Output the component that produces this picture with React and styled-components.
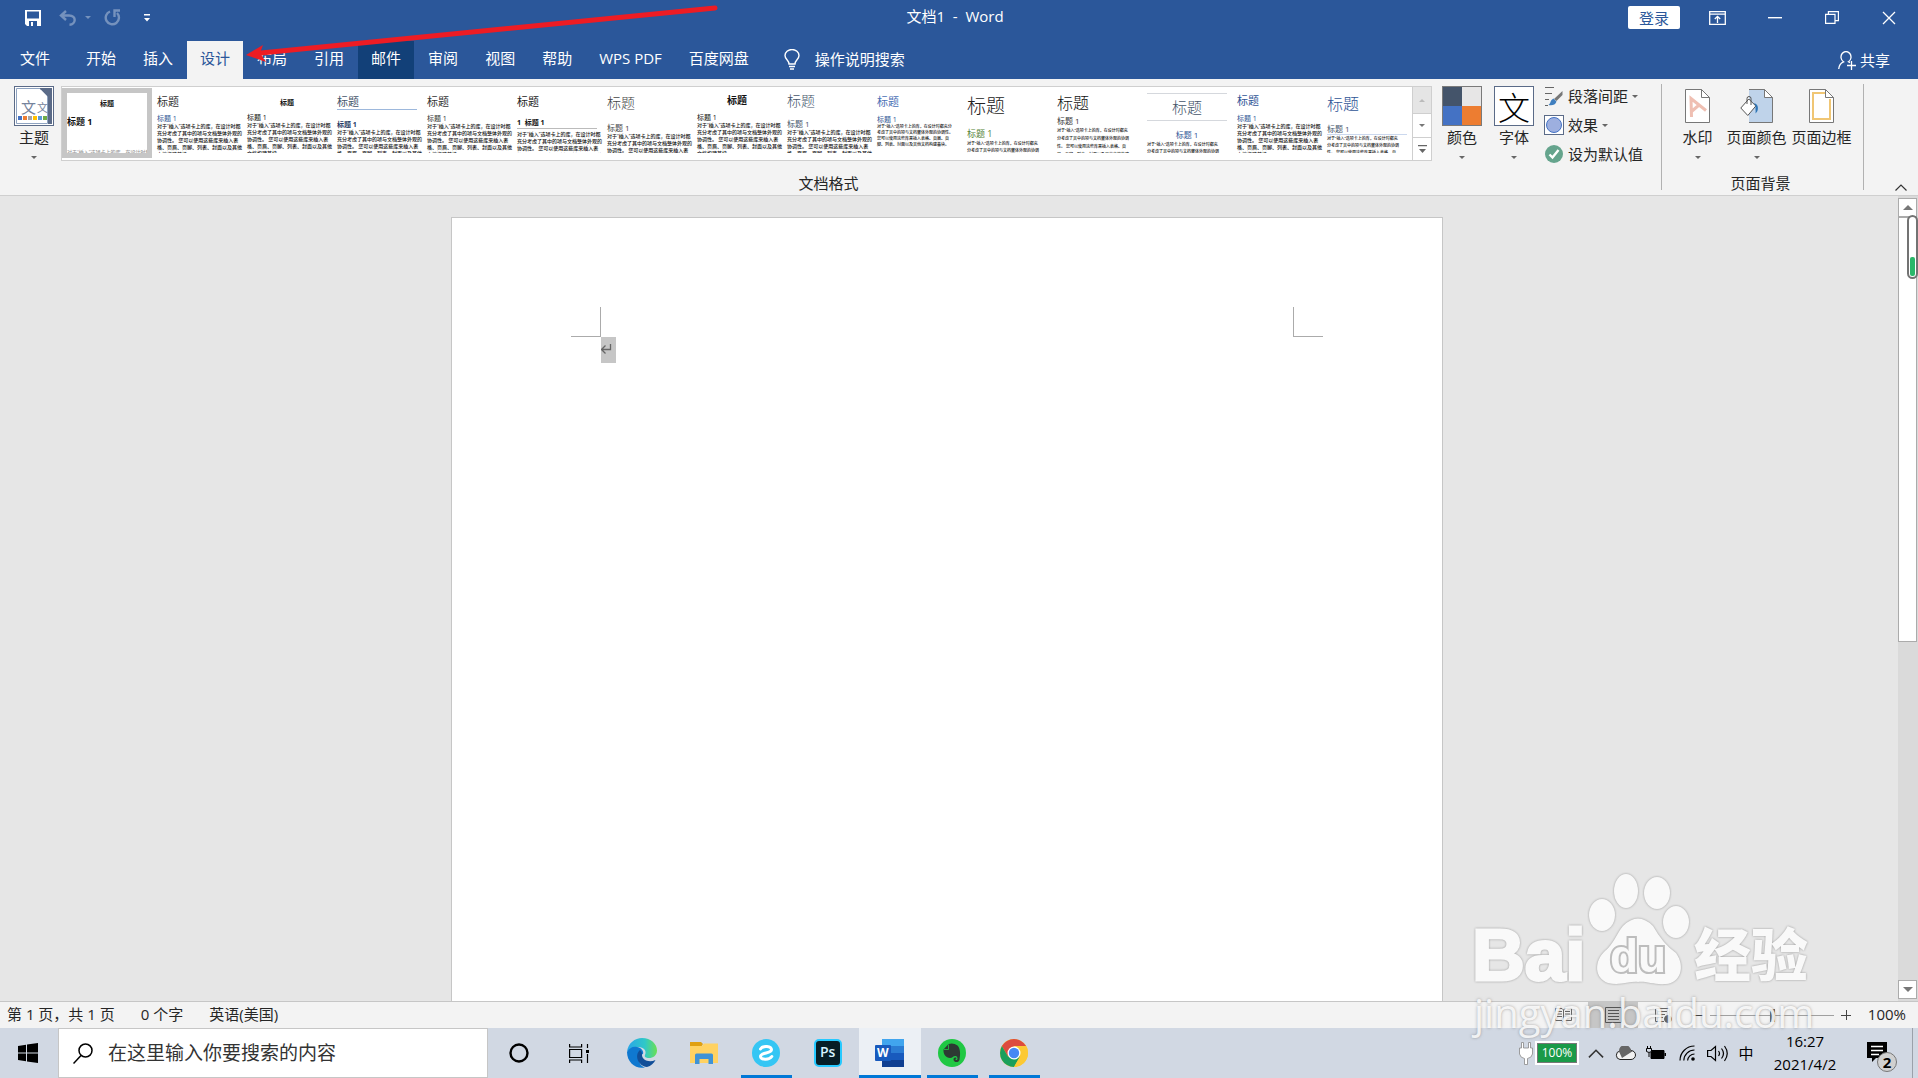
import React from "react";
import styled, { createGlobalStyle, css } from "styled-components";

const GlobalStyle = createGlobalStyle`
  * {
    box-sizing: border-box;
  }
  body {
    margin: 0;
    font-family: "Open Sans", "Noto Sans CJK SC", sans-serif;
    font-size: 15px;
    line-height: 20px;
    color: #262626;
  }
  button, input {
    font: inherit;
    color: inherit;
    margin: 0;
    padding: 0;
    border: 0;
    background: none;
  }
  svg {
    display: block;
    flex: none;
  }
`;

const Window = styled.div`
  position: relative;
  display: flex;
  flex-direction: column;
  height: 100vh;
  overflow: hidden;
`;

/* ---------- title bar and tabs ---------- */

const Header = styled.header`
  background: #2b579a;
  color: white;
`;

const TitleBar = styled.div`
  display: grid;
  grid-template-columns: 1fr auto 1fr;
  align-items: center;
  height: 41px;
  padding-bottom: 6px;
`;

const QuickAccess = styled.div`
  display: flex;
  align-items: center;
  padding-left: 25px;
`;

const QuickButton = styled.button`
  display: flex;
  margin-right: ${({ $gap }) => $gap || 0}px;
  opacity: ${({ disabled }) => (disabled ? 0.35 : 1)};
`;

const DocTitle = styled.h1`
  margin: 0;
  padding: 0 8px 4px 0;
  font-size: 15px;
  font-weight: 400;
  white-space: pre;
`;

const WindowControls = styled.div`
  display: flex;
  align-items: center;
  justify-content: flex-end;
  padding-right: 1px;
`;

const LoginButton = styled.button`
  width: 52px;
  height: 23px;
  margin-right: 9px;
  border-radius: 2px;
  background: white;
  color: #2b579a;
`;

const ControlButton = styled.button`
  display: flex;
  align-items: center;
  justify-content: center;
  width: 57px;
  height: 34px;
`;

const TabBar = styled.nav`
  display: flex;
  gap: 1px;
  height: 38px;
`;

const Tab = styled.button`
  padding: ${({ $file }) => ($file ? "0 22px 4px 20px" : "0 13px 4px")};
  white-space: nowrap;
  ${({ $hover }) => $hover && css`
    background: #124078;
  `}
  ${({ $active }) => $active && css`
    background: #f3f3f3;
    color: #2b579a;
  `}
`;

const TellMe = styled.button`
  display: flex;
  align-items: center;
  gap: 15px;
  padding: 0 21px 2px;
`;

const ShareButton = styled.button`
  display: flex;
  align-items: center;
  gap: 4px;
  margin-left: auto;
  padding-right: 28px;
`;

/* ---------- ribbon ---------- */

const Ribbon = styled.section`
  display: flex;
  height: 117px;
  padding-top: 5px;
  background: #f3f3f3;
  border-bottom: 1px solid #cfcfcf;
`;

const Group = styled.div`
  display: flex;
  flex-direction: column;
  justify-content: space-between;
  flex: ${({ $grow }) => ($grow ? "1 1 0" : "none")};
  min-width: 0;
  height: 106px;
  border-right: 1px solid #b1b1b1;
`;

const GroupRow = styled.div`
  display: flex;
  padding: 2px ${({ $indent }) => $indent || 0}px 0;
`;

const GroupLabel = styled.div`
  line-height: 14px;
  padding-right: 4px;
  text-align: center;
`;

const BigButton = styled.button`
  display: flex;
  flex-direction: column;
  align-items: center;
  flex: none;
  width: ${({ $width }) => $width}px;
  padding-left: ${({ $indent }) => $indent || 0}px;
  white-space: nowrap;
`;

const IconSlot = styled.span`
  display: flex;
  align-items: center;
  justify-content: center;
  height: 40px;
  margin-bottom: 1px;
`;

const Arrow = styled.span`
  width: 0;
  border: 3px solid transparent;
  border-top-color: #666;
  border-bottom: 0;
  margin-top: ${({ $below }) => ($below ? 9 : 0)}px;
`;

const Gallery = styled.div`
  display: flex;
  flex: 1;
  min-width: 0;
  height: 75px;
  margin-right: 4px;
  background: white;
  border: 1px solid #cfcfcf;
`;

const Cards = styled.div`
  display: flex;
  flex: 1;
  min-width: 0;
  overflow: hidden;
  padding-top: 1px;
`;

const Card = styled.button`
  flex: none;
  width: 90px;
  height: 70px;
  padding: 5px;
  text-align: left;
  box-shadow: ${({ $selected }) => ($selected ? "inset 0 0 0 5px #c6c6c6" : "none")};
`;

const Preview = styled.span`
  display: block;
  height: 60px;
  overflow-x: ${({ $selected }) => ($selected ? "clip" : "visible")};
  overflow-y: clip;
  color: #111;
`;

const PreviewTitle = styled.span`
  display: flex;
  align-items: center;
  justify-content: ${({ $center }) => ($center ? "center" : "flex-start")};
  height: ${({ $height }) => $height}px;
  font-size: ${({ $size }) => $size}px;
  font-weight: ${({ $bold, $size }) => ($bold ? 700 : $size > 12 ? 300 : 400)};
  line-height: 1;
  color: ${({ $color }) => $color};
  border: 0 solid ${({ $line }) => $line || "transparent"};
  border-bottom-width: ${({ $line }) => ($line ? 1 : 0)}px;
  border-top-width: ${({ $line, $center }) => ($line && $center ? 1 : 0)}px;
`;

const PreviewHeading = styled(PreviewTitle)`
  margin-top: ${({ $gap }) => $gap}px;
  border-top-width: 0;
  white-space: pre;
`;

const PreviewBody = styled.span`
  display: block;
  width: ${({ $width }) => $width || 86}px;
  margin-top: ${({ $gap }) => $gap || 0}px;
  font-size: ${({ $size }) => $size}px;
  font-weight: 500;
  line-height: ${({ $leading }) => $leading || 7}px;
  word-break: break-all;
  color: ${({ $faint }) => ($faint ? "#999" : "#111")};
`;

const GalleryScroll = styled.div`
  display: grid;
  grid-template-rows: 26px 24px 23px;
  flex: none;
  width: 19px;
  border-left: 1px solid #cfcfcf;
`;

const ScrollStep = styled.button`
  display: flex;
  align-items: center;
  justify-content: center;
  & + & {
    border-top: 1px solid #cfcfcf;
  }
  &:disabled {
    background: #e5e5e5;
  }
`;

const SmallColumn = styled.div`
  display: flex;
  flex-direction: column;
  gap: 9px;
  flex: none;
  width: 121px;
  padding-left: 4px;
`;

const SmallButton = styled.button`
  display: flex;
  align-items: center;
  gap: 4px;
  height: 20px;
  white-space: nowrap;
`;

const CollapseButton = styled.button`
  display: flex;
  align-items: flex-end;
  justify-content: flex-end;
  width: 54px;
  padding: 0 11px 4px 0;
`;

/* ---------- document ---------- */

const Workspace = styled.main`
  display: flex;
  flex: 1;
  min-height: 0;
  background: #e6e6e6;
`;

const Canvas = styled.div`
  display: flex;
  justify-content: center;
  flex: 1;
  padding: 21px 4px 0 0;
  overflow: hidden;
`;

const Page = styled.article`
  width: 992px;
  height: 1403px;
  padding: 89px 119px 0;
  background: white;
  border: 1px solid #c6c6c6;
`;

const Marks = styled.div`
  display: flex;
  justify-content: space-between;
`;

const Mark = styled.span`
  width: 30px;
  height: 30px;
  border: 0 solid #ababab;
  border-bottom-width: 1px;
  ${({ $side }) => ($side === "left" ? "border-right-width: 1px;" : "border-left-width: 1px;")}
`;

const Paragraph = styled.p`
  width: 15px;
  height: 26px;
  margin: 0 0 0 30px;
  padding-top: 7px;
  background: #c6c6c6;
`;

const ScrollBar = styled.div`
  display: flex;
  flex-direction: column;
  width: 20px;
  padding: 2px 1px 2px 0;
  background: #dadada;
`;

const ScrollButton = styled.button`
  display: flex;
  align-items: center;
  justify-content: center;
  height: 19px;
  background: white;
  border: 1px solid #ababab;
`;

const Thumb = styled.div`
  flex: 5;
  background: white;
  border: 1px solid #ababab;
`;

const Track = styled.div`
  flex: 4;
`;

const Meter = styled.div`
  position: absolute;
  top: 215px;
  right: 0;
  display: flex;
  flex-direction: column;
  justify-content: flex-end;
  width: 11px;
  height: 64px;
  padding: 1px;
  border: 2px solid #737373;
  border-radius: 6px;
  background: white;
`;

const MeterFill = styled.span`
  height: 19px;
  border-radius: 2px;
  background: #2bb76a;
`;

/* ---------- status bar ---------- */

const StatusBar = styled.footer`
  display: flex;
  align-items: center;
  height: 27px;
  padding: 0 12px 0 7px;
  background: #f3f3f3;
  border-top: 1px solid #c6c6c6;
`;

const StatusText = styled.span`
  margin-right: 26px;
  padding-bottom: 2px;
`;

const Views = styled.div`
  display: flex;
  height: 100%;
  margin-left: auto;
  margin-right: 2px;
`;

const ViewButton = styled.button`
  display: flex;
  align-items: center;
  justify-content: center;
  width: 50px;
  background: ${({ $active }) => ($active ? "#c6c6c6" : "none")};
`;

const ZoomStep = styled.button`
  width: 16px;
  height: 20px;
  display: flex;
  align-items: center;
  justify-content: center;
`;

const ZoomSlider = styled.input`
  appearance: none;
  width: 124px;
  height: 13px;
  margin: 0 4px;
  background: linear-gradient(#a0a0a0, #a0a0a0) center / 100% 1px no-repeat;
  &::-webkit-slider-thumb {
    appearance: none;
    width: 5px;
    height: 13px;
    background: #666;
  }
`;

const ZoomValue = styled.span`
  width: 52px;
  padding-bottom: 2px;
  text-align: right;
`;

/* ---------- taskbar ---------- */

const TaskBar = styled.nav`
  display: flex;
  flex: none;
  height: 50px;
  background: #d1d8e3;
  color: black;
`;

const StartButton = styled.button`
  display: flex;
  align-items: center;
  justify-content: center;
  width: 58px;
  padding-right: 2px;
`;

const SearchBox = styled.label`
  display: flex;
  align-items: center;
  gap: 15px;
  width: 430px;
  padding: 0 14px;
  background: white;
  border: 1px solid #c6c6c6;
`;

const SearchInput = styled.input`
  flex: 1;
  min-width: 0;
  font-size: 19px;
  outline: 0;
  &::placeholder {
    color: #333;
    opacity: 1;
  }
`;

const AppButton = styled.button`
  display: flex;
  align-items: center;
  justify-content: center;
  width: ${({ $width }) => $width || 62}px;
  background: ${({ $active }) => ($active ? "#ecf0f5" : "none")};
  ${({ $open, $active }) => $open && css`
    background-image: linear-gradient(#0078d7, #0078d7);
    background-size: ${$active ? 62 : 51}px 3px;
    background-position: center bottom;
    background-repeat: no-repeat;
  `}
`;

const Apps = styled.div`
  display: flex;
  margin-left: 1px;
`;

const Tray = styled.div`
  display: flex;
  align-items: center;
  margin-left: auto;
  padding-right: 5px;
`;

const TrayButton = styled.button`
  display: flex;
  align-items: center;
  justify-content: center;
  width: ${({ $width }) => $width}px;
  height: 50px;
`;

const Battery = styled.span`
  width: 40px;
  height: 20px;
  margin-left: 4px;
  background: #1a9a48;
  border: 1px solid #777;
  outline: 2px solid white;
  color: white;
  font-size: 12px;
  line-height: 18px;
  text-align: center;
`;

const Clock = styled.button`
  width: 84px;
  margin-left: 7px;
  line-height: 23px;
  text-align: center;
`;

const NoticeButton = styled.button`
  position: relative;
  display: flex;
  align-items: center;
  justify-content: center;
  width: 65px;
  height: 50px;
  padding: 0 5px 2px 0;
`;

const Badge = styled.span`
  position: absolute;
  left: 30px;
  top: 24px;
  width: 20px;
  height: 20px;
  border: 1px solid #777;
  border-radius: 50%;
  background: #d0d0d0;
  font-weight: 700;
  line-height: 18px;
`;

const DesktopEdge = styled.span`
  width: 1px;
  height: 50px;
  background: #9ba1aa;
`;

/* ---------- overlays ---------- */

const RedArrow = styled.svg`
  position: absolute;
  left: 245px;
  top: 0;
  pointer-events: none;
`;

const Watermark = styled.div`
  position: absolute;
  right: 102px;
  bottom: 41px;
  width: 342px;
  pointer-events: none;
`;

const WatermarkUrl = styled.div`
  margin-top: 4px;
  font-size: 40px;
  line-height: 48px;
  white-space: nowrap;
  color: rgba(255, 255, 255, 0.85);
  text-shadow: 0 0 3px rgba(110, 110, 110, 0.6);
`;

const Logo = styled.svg`
  overflow: visible;
  filter: drop-shadow(0 0 1px #999);
`;

const BODY =
  "对于“插入”选项卡上的库，在设计时都充分考虑了其中的项与文档整体外观的协调性。 您可以使用这些库来插入表格、页眉、页脚、列表、封面以及其他文档构建基块。";

// title: [size, box height, color], heading: [size, gap above, box height, color]
const STYLES = [
  { title: [7, 20, "#111"], heading: [9, 0, 16, "#111"], center: true, bold: true, headBold: true, bodyGap: 20, faint: true },
  { title: [11, 16, "#333"], heading: [7, 5, 9, "#2f5496"] },
  { title: [7, 19, "#111"], heading: [7, 0, 10, "#111"], center: true, bold: true },
  { title: [11, 17, "#44546a"], heading: [7, 10, 9, "#1f3864"], titleLine: "#9db8dc", headBold: true },
  { title: [11, 16, "#333"], heading: [7, 5, 9, "#333"] },
  { title: [11, 16, "#222"], heading: [7, 7, 13, "#111"], headBold: true, numbered: true, headLine: "#bbb", bodyGap: 2 },
  { title: [14, 20, "#444"], heading: [8, 9, 11, "#444"] },
  { title: [10, 14, "#111"], heading: [7, 6, 9, "#111"], center: true, bold: true },
  { title: [14, 16, "#44546a"], heading: [8, 10, 10, "#44546a"] },
  { title: [11, 16, "#4a6fb5"], heading: [7, 6, 9, "#2f5496"], bodySize: 4, bodyWidth: 78, leading: 6 },
  { title: [19, 26, "#222"], heading: [9, 8, 13, "#538135"], bodySize: 4, bodyWidth: 74 },
  { title: [16, 20, "#111"], heading: [8, 2, 12, "#333"], bodySize: 4, bodyWidth: 74, leading: 8 },
  { title: [15, 28, "#44546a"], heading: [8, 7, 13, "#2f5496"], center: true, headCenter: true, titleLine: "#d5d8dd", bodySize: 4, bodyWidth: 74 },
  { title: [11, 15, "#2f5496"], heading: [7, 6, 9, "#2f5496"] },
  { title: [16, 22, "#2f5496"], heading: [8, 8, 12, "#44546a"], headLine: "#cbd8ee", bodySize: 4, bodyWidth: 74 },
];

const StyleCard = ({ item, selected }) => (
  <Card $selected={selected}>
    <Preview $selected={selected}>
      <PreviewTitle
        $size={item.title[0]}
        $height={item.title[1]}
        $color={item.title[2]}
        $center={item.center}
        $bold={item.bold}
        $line={item.titleLine}
      >
        标题
      </PreviewTitle>
      <PreviewHeading
        $size={item.heading[0]}
        $gap={item.heading[1]}
        $height={item.heading[2]}
        $color={item.heading[3]}
        $center={item.headCenter}
        $bold={item.headBold}
        $line={item.headLine}
      >
        {item.numbered ? "1  标题 1" : "标题 1"}
      </PreviewHeading>
      <PreviewBody
        $size={item.bodySize || 5}
        $width={item.bodyWidth}
        $gap={item.bodyGap}
        $leading={item.leading}
        $faint={item.faint}
      >
        {BODY}
      </PreviewBody>
    </Preview>
  </Card>
);

/* ---------- icons ---------- */

const SaveIcon = () => (
  <svg width="16" height="16" viewBox="0 0 16 16">
    <path d="M0 0h16v16H2l-2-2z" fill="white" />
    <path d="M2 1.5h12v7H2z" fill="#2b579a" />
    <path d="M4 11h8v5H4z" fill="#2b579a" />
    <path d="M6 12h2v4H6z" fill="white" />
  </svg>
);

const UndoIcon = () => (
  <svg width="18" height="16" viewBox="0 0 18 16" fill="none" stroke="white" strokeWidth="2.4">
    <path d="M7 1L2 5.5 7 10M2 5.5h8c8 0 7 9 .5 9.3" />
  </svg>
);

const RedoIcon = () => (
  <svg width="17" height="17" viewBox="0 0 17 17" fill="none" stroke="white" strokeWidth="2.4">
    <path d="M6 2.5A6.6 6.6 0 1 0 13 4M16 1.5h-5.5V8" />
  </svg>
);

const MoreIcon = () => (
  <svg width="6" height="8" viewBox="0 0 6 8" fill="white">
    <path d="M0 0h6v1.4H0zM0 4h6L3 7.5z" />
  </svg>
);

const RibbonIcon = () => (
  <svg width="17" height="14" viewBox="0 0 17 14" fill="none" stroke="white" strokeWidth="1.3">
    <path d="M.7.7h15.6v12.6H.7zM.7 3.2h15.6M8.5 12V5.5M5.8 8l2.7-2.7L11.2 8" />
  </svg>
);

const RestoreIcon = () => (
  <svg width="14" height="13" viewBox="0 0 14 13" fill="none" stroke="white" strokeWidth="1.2">
    <path d="M.6 3.4h9.4v9H.6zM3.4 3.2V.6h10v9h-3" />
  </svg>
);

const CloseIcon = () => (
  <svg width="14" height="14" viewBox="0 0 14 14" stroke="white" strokeWidth="1.3">
    <path d="M1 1l12 12M13 1L1 13" />
  </svg>
);

const BulbIcon = () => (
  <svg width="16" height="21" viewBox="0 0 16 21" fill="none" stroke="white" strokeWidth="1.4">
    <path d="M5 15c0-4-4-4.500-4-8.500a7 6 0 0 1 14 0c0 4-4 4.500-4 8.500zM5 17.500h6M6 20h4" />
  </svg>
);

const ShareIcon = () => (
  <svg width="18" height="19" viewBox="0 0 18 19" fill="none" stroke="white" strokeWidth="1.3">
    <path d="M.7 18c.3-4 2-6 4.800-7.200a5 5.500 0 1 1 5 0l1.500.8M13.500 10v9M9 14.500h9" />
  </svg>
);

const ThemeIcon = () => (
  <svg width="40" height="40" viewBox="0 0 40 40">
    <rect x=".5" y=".5" width="39" height="39" fill="white" stroke="#5b6b88" />
    <path d="M2.500 2.500h24l7 8v27h-31z" fill="white" stroke="#8fa3c0" />
    <text x="7" y="27" fontSize="15" fill="#75839c">文</text>
    <text x="23" y="26" fontSize="11" fill="#75839c">文</text>
    <path d="M26 2h12v36h-4V11l-8-8z" fill="#5b6b88" />
    <path d="M27 4v6h6z" fill="white" />
    {["#4472c4", "#ed7d31", "#a5a5a5", "#ffc000", "#5b9bd5", "#70ad47"].map((c, i) => (
      <rect key={c} x={4 + i * 5} y="30" width="4" height="4" fill={c} />
    ))}
  </svg>
);

const ColorsIcon = () => (
  <svg width="40" height="40" viewBox="0 0 40 40">
    <path d="M0 0h20v20H0z" fill="#44546a" />
    <path d="M20 0h20v20H20z" fill="#e7e6e6" />
    <path d="M0 20h20v20H0z" fill="#4472c4" />
    <path d="M20 20h20v20H20z" fill="#ed7d31" />
    <rect x=".5" y=".5" width="39" height="39" fill="none" stroke="#7a7a7a" />
  </svg>
);

const FontsIcon = () => (
  <svg width="40" height="40" viewBox="0 0 40 40">
    <rect x=".5" y=".5" width="39" height="39" fill="white" stroke="#5b6b88" />
    <text x="4" y="34" fontSize="32" fontWeight="300" fill="black">文</text>
  </svg>
);

const SpacingIcon = () => (
  <svg width="20" height="20" viewBox="0 0 20 20" fill="none">
    <path d="M1 1.500h9M1 7.500h7M1 13.500h4M1 19.500h3" stroke="#666" />
    <path d="M18.500 5v4l-6 6-2.500-2z" fill="#777" />
    <path d="M9.500 12.500l3 3c-1 4-5 4-8 3.500 2.500-1.500 1.500-5 5-6.500z" fill="#3f7fbf" />
  </svg>
);

const EffectsIcon = () => (
  <svg width="20" height="20" viewBox="0 0 20 20">
    <rect x=".5" y=".5" width="19" height="19" fill="white" stroke="#5b6b88" />
    <circle cx="10" cy="10" r="7.500" fill="#9dafdf" stroke="#4472c4" />
  </svg>
);

const DefaultIcon = () => (
  <svg width="20" height="18" viewBox="0 0 20 18">
    <circle cx="10" cy="9" r="9" fill="#65a48d" />
    <path d="M5.500 9.500l3 3 6-7.500" fill="none" stroke="white" strokeWidth="2.400" />
  </svg>
);

const SheetShape = ({ fill }) => (
  <>
    <path d="M.5.5h16l8 8v25H.5z" fill={fill} stroke="#777" />
    <path d="M16.500.5v8h8z" fill="white" stroke="#777" />
  </>
);

const WatermarkIcon = () => (
  <svg width="25" height="34" viewBox="0 0 25 34">
    <SheetShape fill="white" />
    <path d="M6.500 28L6 9.500l15 12M6.500 22.500l7-6" fill="none" stroke="#efbfb2" strokeWidth="3" />
  </svg>
);

const PageColorIcon = () => (
  <svg width="33" height="34" viewBox="0 0 33 34">
    <g transform="translate(8 0)">
      <SheetShape fill="#bfd3ea" />
    </g>
    <path d="M8 0v10M8 26v8" stroke="#f3f3f3" strokeWidth="2" />
    <path d="M.800 19l8-9 7 7-8 9.500z" fill="white" stroke="#555" />
    <path d="M7 15V9.500a2 2 0 0 1 4 0V16" fill="none" stroke="#555" />
    <path d="M14 14c5 1 5 8 1.500 10.500.5-3-.5-5 .3-7z" fill="#2e75b6" />
  </svg>
);

const BorderIcon = () => (
  <svg width="25" height="34" viewBox="0 0 25 34">
    <SheetShape fill="white" />
    <path d="M16 4H4v26h17V10" fill="none" stroke="#f0c674" strokeWidth="2" />
  </svg>
);

const Triangle = ({ up, color = "#777", size = 8 }) => (
  <svg width={size} height={size / 2} viewBox="0 0 8 4">
    <path d={up ? "M0 4h8L4 0z" : "M0 0h8L4 4z"} fill={color} />
  </svg>
);

const ChevronUp = ({ width = 12 }) => (
  <svg width={width} height={width / 2 + 1} viewBox="0 0 12 7" fill="none" stroke="#333" strokeWidth="1.200">
    <path d="M.5 6.500L6 1l5.500 5.500" />
  </svg>
);

const ReturnIcon = () => (
  <svg width="11" height="10" viewBox="0 0 11 10" fill="none" stroke="#666" strokeWidth="1.300">
    <path d="M9.500 0v5.500H1M4.500 1.500l-4 4 4 4" />
  </svg>
);

const ReadIcon = () => (
  <svg width="17" height="15" viewBox="0 0 17 15" fill="none" stroke="#666">
    <path d="M8.500 14.500V2L7 .5H.5v12H7l1.500 2 1.500-2h6.500V.5H10L8.500 2M2 3.500h5M2 6h5M2 8.500h5M10 3.500h5M10 6h5M10 8.500h5" />
  </svg>
);

const PrintIcon = () => (
  <svg width="17" height="16" viewBox="0 0 17 16" fill="none" stroke="#555">
    <path d="M.5.500h16v15H.5zM3 3.500h11M3 6.500h11M3 9.500h11M3 12.500h11" />
  </svg>
);

const WebIcon = () => (
  <svg width="17" height="15" viewBox="0 0 17 15" fill="none" stroke="#666">
    <path d="M9 13.500H.5V.5h14V7M3 3.500h9M3 6.500h7M3 9.500h5" />
    <circle cx="13" cy="11" r="3.500" fill="#666" />
  </svg>
);

const WindowsIcon = () => (
  <svg width="20" height="20" viewBox="0 0 20 20" fill="black">
    <path d="M0 3l8-1.200v7.700H0zM9 1.600L20 0v9.500H9zM0 10.500h8v7.700L0 17zM9 10.500h11V20L9 18.400z" />
  </svg>
);

const SearchIcon = () => (
  <svg width="20" height="21" viewBox="0 0 20 21" fill="none" stroke="black" strokeWidth="1.500">
    <circle cx="12.500" cy="7.500" r="6.500" />
    <path d="M8 12.500L.5 20.500" />
  </svg>
);

const CortanaIcon = () => (
  <svg width="20" height="20" viewBox="0 0 20 20">
    <circle cx="10" cy="10" r="8.500" fill="none" stroke="black" strokeWidth="2.400" />
  </svg>
);

const TaskViewIcon = () => (
  <svg width="21" height="19" viewBox="0 0 21 19" fill="none" stroke="black" strokeWidth="1.200">
    <path d="M.6 0v3h12V0M.6 5.500h12v8H.6zM.6 19v-3h12v3M18.500 0v4M18.500 10v9" />
    <path d="M17 6h3v3h-3z" fill="black" stroke="none" />
  </svg>
);

const EdgeIcon = () => (
  <svg width="30" height="30" viewBox="0 0 30 30">
    <defs>
      <linearGradient id="edgeTop" x1="0" x2="1">
        <stop offset="0" stopColor="#2aa5e8" />
        <stop offset=".6" stopColor="#2fc8c8" />
        <stop offset="1" stopColor="#6be052" />
      </linearGradient>
    </defs>
    <path d="M0 14C1 5 8 0 15 0c9 0 15 6 15 12.500 0 5-4 7.500-8 7.500-3 0-5-1-4-3 2-4-1-8-7-8C6 9 2 11 0 14z" fill="url(#edgeTop)" />
    <path d="M0 14c2-4 6-6 10-5 4 .6 7 4 6 7-6 1-5 12 2 13.500-9 2-18-5-18-15.500z" fill="#0f78d0" />
    <path d="M13 12c-6 5-2 16 7 17 4-1 7-4 8.500-7C22 25 15 22 15 17c0-2 0-3-2-5z" fill="#114e98" />
  </svg>
);

const FolderIcon = () => (
  <svg width="28" height="24" viewBox="0 0 28 24">
    <path d="M0 1h11l2 2-2 3H0z" fill="#e0a011" />
    <path d="M0 5h12l2-2.500h14V22H0z" fill="#ffd262" />
    <path d="M5 23V14q0-1.500 1.500-1.500h15Q23 12.500 23 14v9h-4.500v-5h-9v5z" fill="#3f93d6" />
  </svg>
);

const BrowserIcon = () => (
  <svg width="28" height="28" viewBox="0 0 28 28">
    <circle cx="14" cy="14" r="14" fill="#35c6f4" />
    <path
      d="M8.500 10C11 6 19.500 7 19.500 10.800 19.500 14.500 8.500 13.500 8.500 17.300 8.500 21 17 21.500 19.800 17.500"
      fill="none"
      stroke="white"
      strokeWidth="3"
      strokeLinecap="round"
    />
  </svg>
);

const PsIcon = () => (
  <svg width="28" height="28" viewBox="0 0 28 28">
    <rect x="1" y="1" width="26" height="26" rx="4" fill="#061e26" stroke="#26c9ff" strokeWidth="2" />
    <text x="6" y="18" fontSize="14" fontWeight="600" fill="#d6f3ff">Ps</text>
  </svg>
);

const WordIcon = () => (
  <svg width="30" height="28" viewBox="0 0 30 28">
    <path d="M7 0h22v7H7z" fill="#41a5ee" />
    <path d="M7 7h22v7H7z" fill="#2b7cd3" />
    <path d="M7 14h22v7H7z" fill="#185abd" />
    <path d="M7 21h22v7H7z" fill="#103f91" />
    <rect y="6" width="16" height="16" rx="1" fill="#185abd" />
    <text x="2" y="18" fontSize="12" fontWeight="700" fill="white">W</text>
  </svg>
);

const EvernoteIcon = () => (
  <svg width="28" height="28" viewBox="0 0 28 28">
    <circle cx="14" cy="14" r="14" fill="#20c844" />
    <path d="M5.500 10.500L10.500 5q5-1.500 9 1.500c3 3 3 9 2 14-.5 4-6.500 3-6-.5.3-2 3-2 3-.500-1 0-1.500 1-.500 1.500 2 .5 2-3 0-4-3-.5-3 2-6 2-4 0-7-4-6.500-8.500z" fill="#2d3a33" />
    <path d="M6 10.500h4.500V5.500" fill="none" stroke="#20c844" strokeWidth=".8" />
  </svg>
);

const ChromeIcon = () => (
  <svg width="28" height="28" viewBox="0 0 28 28">
    <circle cx="14" cy="14" r="14" fill="#fcc934" />
    <path d="M1.900 7A14 14 0 0 1 26.100 7H14L8 17.500z" fill="#dd4b3e" />
    <path d="M1.900 7A14 14 0 0 0 14 28l6-10.500H8z" fill="#1a9f5b" />
    <path d="M14 7h12.100A14 14 0 0 1 14 28l6-10.500z" fill="#fcc934" />
    <circle cx="14" cy="14" r="6.500" fill="white" />
    <circle cx="14" cy="14" r="5.200" fill="#4688f4" />
  </svg>
);

const PlugIcon = () => (
  <svg width="14" height="23" viewBox="0 0 14 23" fill="white" stroke="#888" strokeWidth=".8">
    <path d="M2.500.5h2V6h5V.5h2V6h2v6q-1 4-5 4.500V22.500h-3v-6Q1.500 16 .5 12V6h2z" />
  </svg>
);

const CloudIcon = () => (
  <svg width="21" height="14" viewBox="0 0 21 14">
    <path d="M5 13.500a4.300 4.300 0 0 1 0-8.500 6 6 0 0 1 11-.500 4.500 4.500 0 0 1 0 9z" fill="#f2f2f2" stroke="#222" />
    <path d="M4 5.500a6 6 0 0 1 12-1L18 5 7 12z" fill="#666" />
  </svg>
);

const PowerIcon = () => (
  <svg width="20" height="14" viewBox="0 0 20 14">
    <path d="M5 4.500h13v8H5z" stroke="black" />
    <path d="M18.500 7h1.500v3h-1.500z" fill="black" />
    <path d="M.5 2.500h5v3q-2.500 2-5 0zM1.500 0v2.500M4.500 0v2.500M3 7v4" fill="#d1d8e3" stroke="black" />
  </svg>
);

const WifiIcon = () => (
  <svg width="17" height="16" viewBox="0 0 17 16" fill="none" stroke="black" strokeWidth="1.200">
    <path d="M1 15.500A14.500 14.500 0 0 1 15.500 1M4.800 15.500A10.700 10.700 0 0 1 15.500 5M8.600 15.500A7 7 0 0 1 15.500 9" />
    <circle cx="14" cy="14" r="1.800" fill="black" stroke="none" />
  </svg>
);

const VolumeIcon = () => (
  <svg width="21" height="17" viewBox="0 0 21 17" fill="none" stroke="black" strokeWidth="1.200">
    <path d="M.6 5.500H4L8.500 1.500v14L4 11.500H.6zM11.500 6q2 2.500 0 5M14.500 3.500q4 5 0 10M17.500 1q5.500 7.500 0 15" />
  </svg>
);

const NoticeIcon = () => (
  <svg width="20" height="20" viewBox="0 0 20 20">
    <path d="M0 0h20v16H9l-4 4v-4H0z" fill="black" />
    <path d="M4 4.500h12M4 8.500h12M4 12.500h8" stroke="white" strokeWidth="1.300" />
  </svg>
);

const BaiduLogo = () => (
  <Logo width="342" height="112" viewBox="2 0 342 112" fill="#f9f9f9">
    <text x="0" y="107" fontFamily="Liberation Sans" fontSize="73" fontWeight="700" stroke="#f9f9f9" strokeWidth="3">
      Bai
    </text>
    <ellipse cx="130" cy="42" rx="13" ry="16" />
    <ellipse cx="154" cy="18" rx="12" ry="17" />
    <ellipse cx="185" cy="20" rx="13" ry="16" />
    <ellipse cx="204" cy="49" rx="13" ry="16" />
    <path d="M151 53q15-15 30 0 10 18 23 27c10 14 4 30-10 31-12 1-20-3-28-2-8-1-18 4-30 1-14-5-14-22-3-32 8-6 12-18 18-25z" />
    <text
      x="138"
      y="99"
      fontFamily="Liberation Sans"
      fontSize="46"
      fontWeight="700"
      stroke="#bdbdbd"
      strokeWidth="4"
      paintOrder="stroke"
    >
      du
    </text>
    <text x="222" y="103" fontFamily="Noto Sans CJK SC" fontSize="57" fontWeight="900">经验</text>
  </Logo>
);

const APPS = [
  { name: "Edge", icon: <EdgeIcon /> },
  { name: "文件资源管理器", icon: <FolderIcon /> },
  { name: "浏览器", icon: <BrowserIcon />, open: true },
  { name: "Photoshop", icon: <PsIcon /> },
  { name: "Word", icon: <WordIcon />, open: true, active: true },
  { name: "Evernote", icon: <EvernoteIcon />, open: true },
  { name: "Chrome", icon: <ChromeIcon />, open: true },
];

const TABS = ["开始", "插入", "设计", "布局", "引用", "邮件", "审阅", "视图", "帮助", "WPS PDF", "百度网盘"];

const App = () => {
  return (
    <Window>
      <GlobalStyle />
      <Header>
        <TitleBar>
          <QuickAccess>
            <QuickButton $gap={18} aria-label="保存"><SaveIcon /></QuickButton>
            <QuickButton $gap={8} disabled aria-label="撤消"><UndoIcon /></QuickButton>
            <QuickButton $gap={13} disabled aria-label="撤消列表"><Triangle color="white" size={6} /></QuickButton>
            <QuickButton $gap={23} disabled aria-label="恢复"><RedoIcon /></QuickButton>
            <QuickButton aria-label="自定义快速访问工具栏"><MoreIcon /></QuickButton>
          </QuickAccess>
          <DocTitle>{"文档1  -  Word"}</DocTitle>
          <WindowControls>
            <LoginButton>登录</LoginButton>
            <ControlButton aria-label="功能区显示选项"><RibbonIcon /></ControlButton>
            <ControlButton aria-label="最小化">
              <svg width="14" height="2" viewBox="0 0 14 2"><path d="M0 0h14v1.400H0z" fill="white" /></svg>
            </ControlButton>
            <ControlButton aria-label="还原"><RestoreIcon /></ControlButton>
            <ControlButton aria-label="关闭"><CloseIcon /></ControlButton>
          </WindowControls>
        </TitleBar>
        <TabBar>
          <Tab $file>文件</Tab>
          {TABS.map((name) => (
            <Tab key={name} $active={name === "设计"} $hover={name === "邮件"}>{name}</Tab>
          ))}
          <TellMe><BulbIcon />操作说明搜索</TellMe>
          <ShareButton><ShareIcon />共享</ShareButton>
        </TabBar>
      </Header>

      <Ribbon>
        <Group $grow>
          <GroupRow>
            <BigButton $width={61} $indent={7}>
              <IconSlot><ThemeIcon /></IconSlot>
              主题
              <Arrow $below />
            </BigButton>
            <Gallery>
              <Cards>
                {STYLES.map((item, i) => (
                  <StyleCard key={i} item={item} selected={i === 0} />
                ))}
              </Cards>
              <GalleryScroll>
                <ScrollStep disabled aria-label="上一行"><Triangle up color="#bbb" size={6} /></ScrollStep>
                <ScrollStep aria-label="下一行"><Triangle size={6} /></ScrollStep>
                <ScrollStep aria-label="其他">
                  <svg width="9" height="8" viewBox="0 0 9 8" fill="#666"><path d="M0 0h9v1.200H0zM1 4h7L4.500 8z" /></svg>
                </ScrollStep>
              </GalleryScroll>
            </Gallery>
            <BigButton $width={52}>
              <IconSlot><ColorsIcon /></IconSlot>
              颜色
              <Arrow $below />
            </BigButton>
            <BigButton $width={52}>
              <IconSlot><FontsIcon /></IconSlot>
              字体
              <Arrow $below />
            </BigButton>
            <SmallColumn>
              <SmallButton><SpacingIcon />段落间距<Arrow /></SmallButton>
              <SmallButton><EffectsIcon />效果<Arrow /></SmallButton>
              <SmallButton><DefaultIcon />设为默认值</SmallButton>
            </SmallColumn>
          </GroupRow>
          <GroupLabel>文档格式</GroupLabel>
        </Group>
        <Group>
          <GroupRow $indent={9}>
            <BigButton $width={53}>
              <IconSlot><WatermarkIcon /></IconSlot>
              水印
              <Arrow $below />
            </BigButton>
            <BigButton $width={65}>
              <IconSlot><PageColorIcon /></IconSlot>
              页面颜色
              <Arrow $below />
            </BigButton>
            <BigButton $width={65}>
              <IconSlot><BorderIcon /></IconSlot>
              页面边框
            </BigButton>
          </GroupRow>
          <GroupLabel>页面背景</GroupLabel>
        </Group>
        <CollapseButton aria-label="折叠功能区"><ChevronUp /></CollapseButton>
      </Ribbon>

      <Workspace>
        <Canvas>
          <Page>
            <Marks>
              <Mark $side="left" />
              <Mark $side="right" />
            </Marks>
            <Paragraph><ReturnIcon /></Paragraph>
          </Page>
        </Canvas>
        <ScrollBar>
          <ScrollButton aria-label="向上滚动"><Triangle up size={10} /></ScrollButton>
          <Thumb />
          <Track />
          <ScrollButton aria-label="向下滚动"><Triangle size={10} /></ScrollButton>
        </ScrollBar>
      </Workspace>

      <StatusBar>
        <StatusText>第 1 页，共 1 页</StatusText>
        <StatusText>0 个字</StatusText>
        <StatusText>英语(美国)</StatusText>
        <Views>
          <ViewButton aria-label="阅读视图"><ReadIcon /></ViewButton>
          <ViewButton $active aria-label="页面视图"><PrintIcon /></ViewButton>
          <ViewButton aria-label="Web 版式视图"><WebIcon /></ViewButton>
        </Views>
        <ZoomStep aria-label="缩小">
          <svg width="10" height="10" viewBox="0 0 10 10"><path d="M0 5.500h10" stroke="#444" /></svg>
        </ZoomStep>
        <ZoomSlider type="range" min="0" max="100" defaultValue="50" aria-label="缩放" />
        <ZoomStep aria-label="放大">
          <svg width="10" height="10" viewBox="0 0 10 10"><path d="M0 5.500h10M5.500 0v10" stroke="#444" /></svg>
        </ZoomStep>
        <ZoomValue>100%</ZoomValue>
      </StatusBar>

      <TaskBar>
        <StartButton aria-label="开始菜单"><WindowsIcon /></StartButton>
        <SearchBox>
          <SearchIcon />
          <SearchInput type="text" placeholder="在这里输入你要搜索的内容" aria-label="搜索" />
        </SearchBox>
        <AppButton $width={61} aria-label="Cortana"><CortanaIcon /></AppButton>
        <AppButton $width={61} aria-label="任务视图"><TaskViewIcon /></AppButton>
        <Apps>
          {APPS.map((app) => (
            <AppButton key={app.name} aria-label={app.name} $open={app.open} $active={app.active}>
              {app.icon}
            </AppButton>
          ))}
        </Apps>
        <Tray>
          <PlugIcon />
          <Battery>100%</Battery>
          <TrayButton $width={37} aria-label="显示隐藏的图标"><ChevronUp width={16} /></TrayButton>
          <TrayButton $width={22} aria-label="OneDrive"><CloudIcon /></TrayButton>
          <TrayButton $width={40} aria-label="电源"><PowerIcon /></TrayButton>
          <TrayButton $width={22} aria-label="网络"><WifiIcon /></TrayButton>
          <TrayButton $width={38} aria-label="音量"><VolumeIcon /></TrayButton>
          <TrayButton $width={20}>中</TrayButton>
          <Clock>
            16:27
            <br />
            2021/4/2
          </Clock>
          <NoticeButton aria-label="通知">
            <NoticeIcon />
            <Badge>2</Badge>
          </NoticeButton>
          <DesktopEdge />
        </Tray>
      </TaskBar>

      <Meter><MeterFill /></Meter>
      <RedArrow width="476" height="70" viewBox="0 0 476 70" fill="#ed1c24">
        <path d="M470 8L16 53" stroke="#ed1c24" strokeWidth="5" strokeLinecap="round" />
        <path d="M1 55L18 45l-3 8 6 9z" />
      </RedArrow>
      <Watermark>
        <BaiduLogo />
        <WatermarkUrl>jingyan.baidu.com</WatermarkUrl>
      </Watermark>
    </Window>
  );
};

export default App;
